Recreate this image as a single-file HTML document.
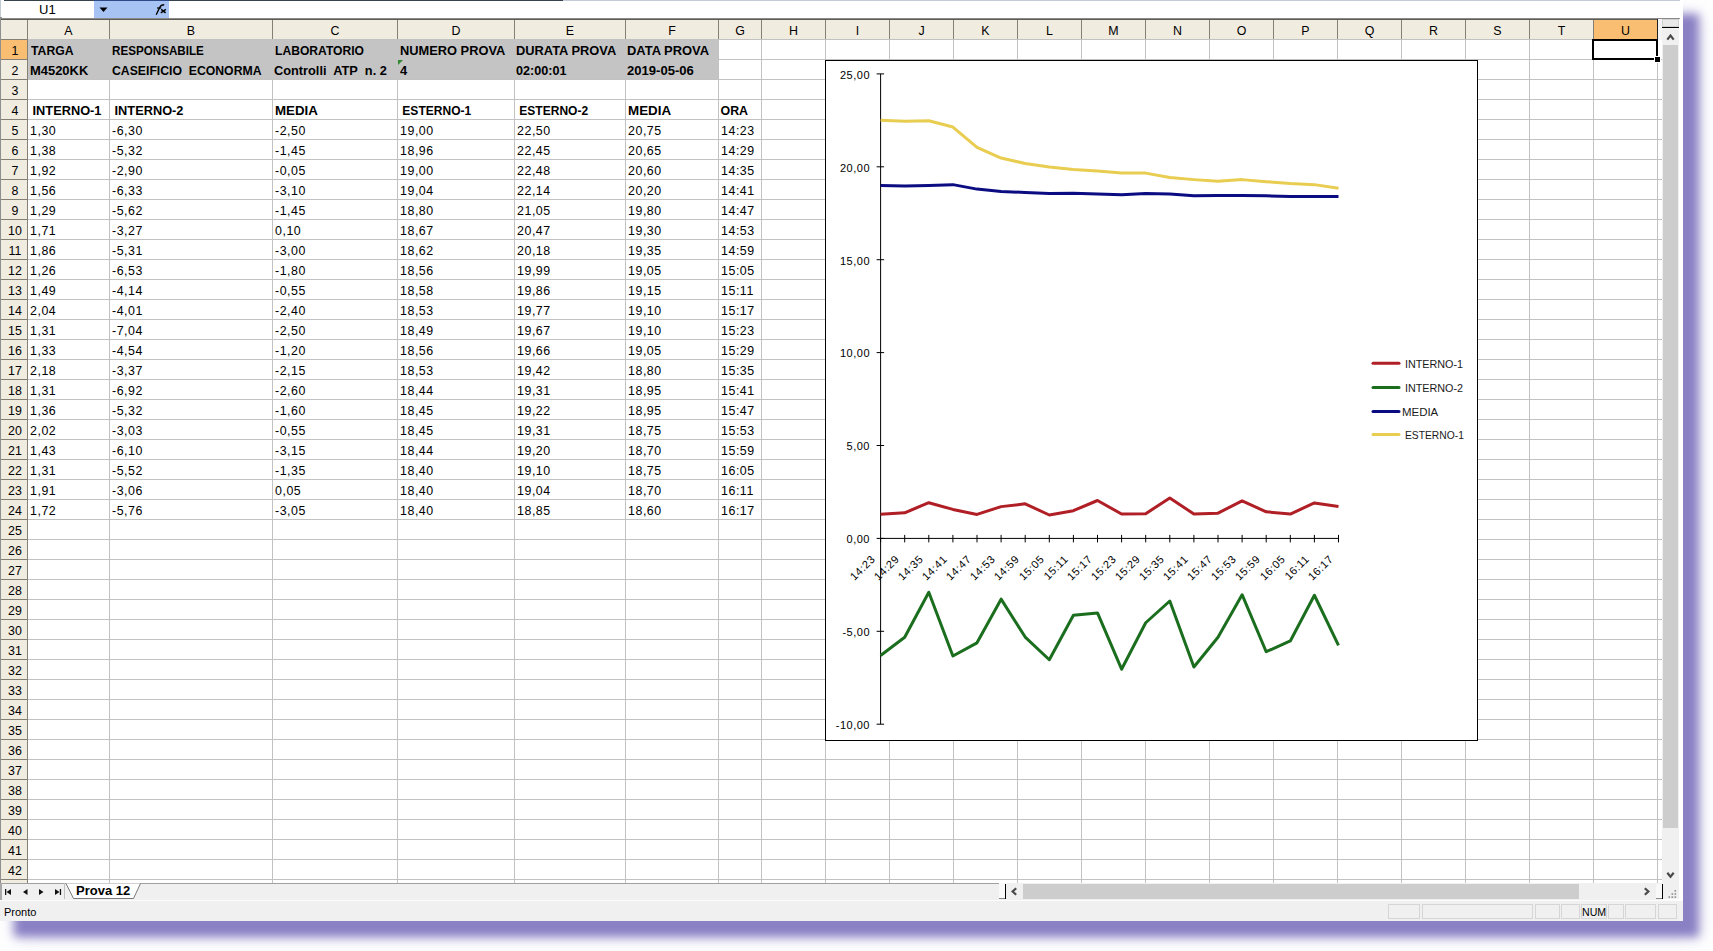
<!DOCTYPE html><html><head><meta charset="utf-8"><style>
*{margin:0;padding:0;box-sizing:border-box}
html,body{width:1713px;height:951px;overflow:hidden;background:#fff}
body{position:relative;font-family:"Liberation Sans",sans-serif;color:#000}
.a{position:absolute}
.t{position:absolute;white-space:nowrap;font-size:12.4px;line-height:20px;height:20px}
.b{font-weight:bold}
.hl{position:absolute;height:1px;background:#c2c2c2}
.vl{position:absolute;width:1px;background:#c2c2c2}

</style></head><body>
<div class="a" style="left:0;top:0;width:1683px;height:921px;background:#fff;box-shadow:15px 15px 9px 1px #8a80c4, 16px 16px 22px 0px rgba(138,128,196,0.22)"></div>
<div class="a" style="left:4px;top:0;width:559px;height:1px;background:#36434a"></div>
<div class="a" style="left:0;top:0;width:1px;height:17px;background:#c2ccd2"></div>
<div class="a" style="left:563px;top:0;width:1117px;height:1px;background:#c3ccd6"></div>
<div class="a" style="left:0;top:17px;width:2px;height:883px;background:#8f8f8f"></div>
<div class="a" style="left:94px;top:0;width:75px;height:1px;background:#2e4a86"></div>
<div class="a" style="left:94px;top:1px;width:75px;height:17.5px;background:#a7c3f3"></div>
<div class="a" style="left:39px;top:1px;font-size:13px;line-height:18px;white-space:nowrap">U1</div>
<svg class="a" style="left:99px;top:7px" width="10" height="6"><path d="M0.5 0.5 L8.5 0.5 L4.5 5 Z" fill="#000"/></svg>
<svg class="a" style="left:150px;top:0px" width="20" height="18"><path d="M6.2 14.7 L9.7 7.4 Q10.9 4.7 14.2 4.7" fill="none" stroke="#000" stroke-width="1.35"/><path d="M7.0 8 L11.2 8" fill="none" stroke="#000" stroke-width="1.2"/><path d="M11.2 9.4 L15.6 12.9 M15.8 9.4 L10.8 12.9" fill="none" stroke="#000" stroke-width="1.45"/></svg>
<div class="a" style="left:1px;top:18px;width:1679px;height:1px;background:#8a8a8a"></div>
<div class="a" style="left:1px;top:19px;width:1661px;height:20px;background:#f1ece0"></div>
<div class="a" style="left:1px;top:19px;width:1661px;height:1px;background:#5f5d58"></div>
<div class="a" style="left:1px;top:39px;width:1661px;height:1px;background:#858075"></div>
<div class="a" style="left:1594px;top:20px;width:63px;height:19px;background:#f9be72"></div>
<div class="a" style="left:109px;top:20px;width:1px;height:19px;background:#858075"></div>
<div class="t" style="left:28px;top:21px;width:81px;text-align:center">A</div>
<div class="a" style="left:272px;top:20px;width:1px;height:19px;background:#858075"></div>
<div class="t" style="left:110px;top:21px;width:162px;text-align:center">B</div>
<div class="a" style="left:397px;top:20px;width:1px;height:19px;background:#858075"></div>
<div class="t" style="left:273px;top:21px;width:124px;text-align:center">C</div>
<div class="a" style="left:514px;top:20px;width:1px;height:19px;background:#858075"></div>
<div class="t" style="left:398px;top:21px;width:116px;text-align:center">D</div>
<div class="a" style="left:625px;top:20px;width:1px;height:19px;background:#858075"></div>
<div class="t" style="left:515px;top:21px;width:110px;text-align:center">E</div>
<div class="a" style="left:718px;top:20px;width:1px;height:19px;background:#858075"></div>
<div class="t" style="left:626px;top:21px;width:92px;text-align:center">F</div>
<div class="a" style="left:761px;top:20px;width:1px;height:19px;background:#858075"></div>
<div class="t" style="left:719px;top:21px;width:42px;text-align:center">G</div>
<div class="a" style="left:825px;top:20px;width:1px;height:19px;background:#858075"></div>
<div class="t" style="left:762px;top:21px;width:63px;text-align:center">H</div>
<div class="a" style="left:889px;top:20px;width:1px;height:19px;background:#858075"></div>
<div class="t" style="left:826px;top:21px;width:63px;text-align:center">I</div>
<div class="a" style="left:953px;top:20px;width:1px;height:19px;background:#858075"></div>
<div class="t" style="left:890px;top:21px;width:63px;text-align:center">J</div>
<div class="a" style="left:1017px;top:20px;width:1px;height:19px;background:#858075"></div>
<div class="t" style="left:954px;top:21px;width:63px;text-align:center">K</div>
<div class="a" style="left:1081px;top:20px;width:1px;height:19px;background:#858075"></div>
<div class="t" style="left:1018px;top:21px;width:63px;text-align:center">L</div>
<div class="a" style="left:1145px;top:20px;width:1px;height:19px;background:#858075"></div>
<div class="t" style="left:1082px;top:21px;width:63px;text-align:center">M</div>
<div class="a" style="left:1209px;top:20px;width:1px;height:19px;background:#858075"></div>
<div class="t" style="left:1146px;top:21px;width:63px;text-align:center">N</div>
<div class="a" style="left:1273px;top:20px;width:1px;height:19px;background:#858075"></div>
<div class="t" style="left:1210px;top:21px;width:63px;text-align:center">O</div>
<div class="a" style="left:1337px;top:20px;width:1px;height:19px;background:#858075"></div>
<div class="t" style="left:1274px;top:21px;width:63px;text-align:center">P</div>
<div class="a" style="left:1401px;top:20px;width:1px;height:19px;background:#858075"></div>
<div class="t" style="left:1338px;top:21px;width:63px;text-align:center">Q</div>
<div class="a" style="left:1465px;top:20px;width:1px;height:19px;background:#858075"></div>
<div class="t" style="left:1402px;top:21px;width:63px;text-align:center">R</div>
<div class="a" style="left:1529px;top:20px;width:1px;height:19px;background:#858075"></div>
<div class="t" style="left:1466px;top:21px;width:63px;text-align:center">S</div>
<div class="a" style="left:1593px;top:20px;width:1px;height:19px;background:#858075"></div>
<div class="t" style="left:1530px;top:21px;width:63px;text-align:center">T</div>
<div class="a" style="left:1657px;top:20px;width:1px;height:19px;background:#858075"></div>
<div class="t" style="left:1594px;top:21px;width:63px;text-align:center">U</div>
<div class="a" style="left:1657px;top:19px;width:1px;height:20px;background:#222"></div>
<div class="a" style="left:1px;top:40px;width:26px;height:843px;background:#f1ece0"></div>
<div class="a" style="left:27px;top:20px;width:1px;height:863px;background:#858075"></div>
<div class="hl" style="left:1px;top:39px;width:26px;background:#858075"></div>
<div class="hl" style="left:28px;top:39px;width:1634px"></div>
<div class="hl" style="left:1px;top:59px;width:26px;background:#858075"></div>
<div class="hl" style="left:28px;top:59px;width:1634px"></div>
<div class="hl" style="left:1px;top:79px;width:26px;background:#858075"></div>
<div class="hl" style="left:28px;top:79px;width:1634px"></div>
<div class="hl" style="left:1px;top:99px;width:26px;background:#858075"></div>
<div class="hl" style="left:28px;top:99px;width:1634px"></div>
<div class="hl" style="left:1px;top:119px;width:26px;background:#858075"></div>
<div class="hl" style="left:28px;top:119px;width:1634px"></div>
<div class="hl" style="left:1px;top:139px;width:26px;background:#858075"></div>
<div class="hl" style="left:28px;top:139px;width:1634px"></div>
<div class="hl" style="left:1px;top:159px;width:26px;background:#858075"></div>
<div class="hl" style="left:28px;top:159px;width:1634px"></div>
<div class="hl" style="left:1px;top:179px;width:26px;background:#858075"></div>
<div class="hl" style="left:28px;top:179px;width:1634px"></div>
<div class="hl" style="left:1px;top:199px;width:26px;background:#858075"></div>
<div class="hl" style="left:28px;top:199px;width:1634px"></div>
<div class="hl" style="left:1px;top:219px;width:26px;background:#858075"></div>
<div class="hl" style="left:28px;top:219px;width:1634px"></div>
<div class="hl" style="left:1px;top:239px;width:26px;background:#858075"></div>
<div class="hl" style="left:28px;top:239px;width:1634px"></div>
<div class="hl" style="left:1px;top:259px;width:26px;background:#858075"></div>
<div class="hl" style="left:28px;top:259px;width:1634px"></div>
<div class="hl" style="left:1px;top:279px;width:26px;background:#858075"></div>
<div class="hl" style="left:28px;top:279px;width:1634px"></div>
<div class="hl" style="left:1px;top:299px;width:26px;background:#858075"></div>
<div class="hl" style="left:28px;top:299px;width:1634px"></div>
<div class="hl" style="left:1px;top:319px;width:26px;background:#858075"></div>
<div class="hl" style="left:28px;top:319px;width:1634px"></div>
<div class="hl" style="left:1px;top:339px;width:26px;background:#858075"></div>
<div class="hl" style="left:28px;top:339px;width:1634px"></div>
<div class="hl" style="left:1px;top:359px;width:26px;background:#858075"></div>
<div class="hl" style="left:28px;top:359px;width:1634px"></div>
<div class="hl" style="left:1px;top:379px;width:26px;background:#858075"></div>
<div class="hl" style="left:28px;top:379px;width:1634px"></div>
<div class="hl" style="left:1px;top:399px;width:26px;background:#858075"></div>
<div class="hl" style="left:28px;top:399px;width:1634px"></div>
<div class="hl" style="left:1px;top:419px;width:26px;background:#858075"></div>
<div class="hl" style="left:28px;top:419px;width:1634px"></div>
<div class="hl" style="left:1px;top:439px;width:26px;background:#858075"></div>
<div class="hl" style="left:28px;top:439px;width:1634px"></div>
<div class="hl" style="left:1px;top:459px;width:26px;background:#858075"></div>
<div class="hl" style="left:28px;top:459px;width:1634px"></div>
<div class="hl" style="left:1px;top:479px;width:26px;background:#858075"></div>
<div class="hl" style="left:28px;top:479px;width:1634px"></div>
<div class="hl" style="left:1px;top:499px;width:26px;background:#858075"></div>
<div class="hl" style="left:28px;top:499px;width:1634px"></div>
<div class="hl" style="left:1px;top:519px;width:26px;background:#858075"></div>
<div class="hl" style="left:28px;top:519px;width:1634px"></div>
<div class="hl" style="left:1px;top:539px;width:26px;background:#858075"></div>
<div class="hl" style="left:28px;top:539px;width:1634px"></div>
<div class="hl" style="left:1px;top:559px;width:26px;background:#858075"></div>
<div class="hl" style="left:28px;top:559px;width:1634px"></div>
<div class="hl" style="left:1px;top:579px;width:26px;background:#858075"></div>
<div class="hl" style="left:28px;top:579px;width:1634px"></div>
<div class="hl" style="left:1px;top:599px;width:26px;background:#858075"></div>
<div class="hl" style="left:28px;top:599px;width:1634px"></div>
<div class="hl" style="left:1px;top:619px;width:26px;background:#858075"></div>
<div class="hl" style="left:28px;top:619px;width:1634px"></div>
<div class="hl" style="left:1px;top:639px;width:26px;background:#858075"></div>
<div class="hl" style="left:28px;top:639px;width:1634px"></div>
<div class="hl" style="left:1px;top:659px;width:26px;background:#858075"></div>
<div class="hl" style="left:28px;top:659px;width:1634px"></div>
<div class="hl" style="left:1px;top:679px;width:26px;background:#858075"></div>
<div class="hl" style="left:28px;top:679px;width:1634px"></div>
<div class="hl" style="left:1px;top:699px;width:26px;background:#858075"></div>
<div class="hl" style="left:28px;top:699px;width:1634px"></div>
<div class="hl" style="left:1px;top:719px;width:26px;background:#858075"></div>
<div class="hl" style="left:28px;top:719px;width:1634px"></div>
<div class="hl" style="left:1px;top:739px;width:26px;background:#858075"></div>
<div class="hl" style="left:28px;top:739px;width:1634px"></div>
<div class="hl" style="left:1px;top:759px;width:26px;background:#858075"></div>
<div class="hl" style="left:28px;top:759px;width:1634px"></div>
<div class="hl" style="left:1px;top:779px;width:26px;background:#858075"></div>
<div class="hl" style="left:28px;top:779px;width:1634px"></div>
<div class="hl" style="left:1px;top:799px;width:26px;background:#858075"></div>
<div class="hl" style="left:28px;top:799px;width:1634px"></div>
<div class="hl" style="left:1px;top:819px;width:26px;background:#858075"></div>
<div class="hl" style="left:28px;top:819px;width:1634px"></div>
<div class="hl" style="left:1px;top:839px;width:26px;background:#858075"></div>
<div class="hl" style="left:28px;top:839px;width:1634px"></div>
<div class="hl" style="left:1px;top:859px;width:26px;background:#858075"></div>
<div class="hl" style="left:28px;top:859px;width:1634px"></div>
<div class="hl" style="left:1px;top:879px;width:26px;background:#858075"></div>
<div class="hl" style="left:28px;top:879px;width:1634px"></div>
<div class="vl" style="left:109px;top:40px;height:843px"></div>
<div class="vl" style="left:272px;top:40px;height:843px"></div>
<div class="vl" style="left:397px;top:40px;height:843px"></div>
<div class="vl" style="left:514px;top:40px;height:843px"></div>
<div class="vl" style="left:625px;top:40px;height:843px"></div>
<div class="vl" style="left:718px;top:40px;height:843px"></div>
<div class="vl" style="left:761px;top:40px;height:843px"></div>
<div class="vl" style="left:825px;top:40px;height:843px"></div>
<div class="vl" style="left:889px;top:40px;height:843px"></div>
<div class="vl" style="left:953px;top:40px;height:843px"></div>
<div class="vl" style="left:1017px;top:40px;height:843px"></div>
<div class="vl" style="left:1081px;top:40px;height:843px"></div>
<div class="vl" style="left:1145px;top:40px;height:843px"></div>
<div class="vl" style="left:1209px;top:40px;height:843px"></div>
<div class="vl" style="left:1273px;top:40px;height:843px"></div>
<div class="vl" style="left:1337px;top:40px;height:843px"></div>
<div class="vl" style="left:1401px;top:40px;height:843px"></div>
<div class="vl" style="left:1465px;top:40px;height:843px"></div>
<div class="vl" style="left:1529px;top:40px;height:843px"></div>
<div class="vl" style="left:1593px;top:40px;height:843px"></div>
<div class="vl" style="left:1657px;top:40px;height:843px"></div>
<div class="a" style="left:1px;top:40px;width:26px;height:19px;background:#f9be72"></div>
<div class="t" style="left:2px;width:26px;text-align:center;top:41px">1</div>
<div class="t" style="left:2px;width:26px;text-align:center;top:61px">2</div>
<div class="t" style="left:2px;width:26px;text-align:center;top:81px">3</div>
<div class="t" style="left:2px;width:26px;text-align:center;top:101px">4</div>
<div class="t" style="left:2px;width:26px;text-align:center;top:121px">5</div>
<div class="t" style="left:2px;width:26px;text-align:center;top:141px">6</div>
<div class="t" style="left:2px;width:26px;text-align:center;top:161px">7</div>
<div class="t" style="left:2px;width:26px;text-align:center;top:181px">8</div>
<div class="t" style="left:2px;width:26px;text-align:center;top:201px">9</div>
<div class="t" style="left:2px;width:26px;text-align:center;top:221px">10</div>
<div class="t" style="left:2px;width:26px;text-align:center;top:241px">11</div>
<div class="t" style="left:2px;width:26px;text-align:center;top:261px">12</div>
<div class="t" style="left:2px;width:26px;text-align:center;top:281px">13</div>
<div class="t" style="left:2px;width:26px;text-align:center;top:301px">14</div>
<div class="t" style="left:2px;width:26px;text-align:center;top:321px">15</div>
<div class="t" style="left:2px;width:26px;text-align:center;top:341px">16</div>
<div class="t" style="left:2px;width:26px;text-align:center;top:361px">17</div>
<div class="t" style="left:2px;width:26px;text-align:center;top:381px">18</div>
<div class="t" style="left:2px;width:26px;text-align:center;top:401px">19</div>
<div class="t" style="left:2px;width:26px;text-align:center;top:421px">20</div>
<div class="t" style="left:2px;width:26px;text-align:center;top:441px">21</div>
<div class="t" style="left:2px;width:26px;text-align:center;top:461px">22</div>
<div class="t" style="left:2px;width:26px;text-align:center;top:481px">23</div>
<div class="t" style="left:2px;width:26px;text-align:center;top:501px">24</div>
<div class="t" style="left:2px;width:26px;text-align:center;top:521px">25</div>
<div class="t" style="left:2px;width:26px;text-align:center;top:541px">26</div>
<div class="t" style="left:2px;width:26px;text-align:center;top:561px">27</div>
<div class="t" style="left:2px;width:26px;text-align:center;top:581px">28</div>
<div class="t" style="left:2px;width:26px;text-align:center;top:601px">29</div>
<div class="t" style="left:2px;width:26px;text-align:center;top:621px">30</div>
<div class="t" style="left:2px;width:26px;text-align:center;top:641px">31</div>
<div class="t" style="left:2px;width:26px;text-align:center;top:661px">32</div>
<div class="t" style="left:2px;width:26px;text-align:center;top:681px">33</div>
<div class="t" style="left:2px;width:26px;text-align:center;top:701px">34</div>
<div class="t" style="left:2px;width:26px;text-align:center;top:721px">35</div>
<div class="t" style="left:2px;width:26px;text-align:center;top:741px">36</div>
<div class="t" style="left:2px;width:26px;text-align:center;top:761px">37</div>
<div class="t" style="left:2px;width:26px;text-align:center;top:781px">38</div>
<div class="t" style="left:2px;width:26px;text-align:center;top:801px">39</div>
<div class="t" style="left:2px;width:26px;text-align:center;top:821px">40</div>
<div class="t" style="left:2px;width:26px;text-align:center;top:841px">41</div>
<div class="t" style="left:2px;width:26px;text-align:center;top:861px">42</div>
<div class="t" style="left:2px;width:26px;text-align:center;top:881px">43</div>
<div class="a" style="left:28px;top:40px;width:690px;height:39px;background:#c4c4c5"></div>
<div class="t b" style="left:30.60px;top:41px;transform:scaleX(0.986);transform-origin:0 50%;">TARGA</div>
<div class="t b" style="left:111.76px;top:41px;transform:scaleX(0.939);transform-origin:0 50%;">RESPONSABILE</div>
<div class="t b" style="left:274.52px;top:41px;transform:scaleX(0.977);transform-origin:0 50%;">LABORATORIO</div>
<div class="t b" style="left:399.56px;top:41px;transform:scaleX(1.036);transform-origin:0 50%;">NUMERO PROVA</div>
<div class="t b" style="left:516.26px;top:41px;transform:scaleX(1.037);transform-origin:0 50%;">DURATA PROVA</div>
<div class="t b" style="left:627.46px;top:41px;transform:scaleX(1.043);transform-origin:0 50%;">DATA PROVA</div>
<div class="t b" style="left:29.56px;top:61px;transform:scaleX(1.044);transform-origin:0 50%;">M4520KK</div>
<div class="t b" style="left:111.71px;top:61px;transform:scaleX(0.987);transform-origin:0 50%;">CASEIFICIO&nbsp; ECONORMA</div>
<div class="t b" style="left:274.47px;top:61px;transform:scaleX(1.031);transform-origin:0 50%;">Controlli&nbsp; ATP&nbsp; n. 2</div>
<div class="t b" style="left:399.90px;top:61px;transform:scaleX(1.043);transform-origin:0 50%;">4</div>
<div class="t b" style="left:516.28px;top:61px;transform:scaleX(1.019);transform-origin:0 50%;">02:00:01</div>
<div class="t b" style="left:627.45px;top:61px;transform:scaleX(1.055);transform-origin:0 50%;">2019-05-06</div>
<div class="t b" style="left:28.64px;top:101px;transform:scaleX(1.032);transform-origin:0 50%;">&nbsp;INTERNO-1</div>
<div class="t b" style="left:110.64px;top:101px;transform:scaleX(1.032);transform-origin:0 50%;">&nbsp;INTERNO-2</div>
<div class="t b" style="left:274.53px;top:101px;transform:scaleX(1.074);transform-origin:0 50%;">MEDIA</div>
<div class="t b" style="left:398.74px;top:101px;transform:scaleX(0.971);transform-origin:0 50%;">&nbsp;ESTERNO-1</div>
<div class="t b" style="left:515.85px;top:101px;transform:scaleX(0.970);transform-origin:0 50%;">&nbsp;ESTERNO-2</div>
<div class="t b" style="left:627.62px;top:101px;transform:scaleX(1.079);transform-origin:0 50%;">MEDIA</div>
<div class="t b" style="left:720.50px;top:101px;transform:scaleX(1.000);transform-origin:0 50%;">ORA</div>
<div class="t" style="left:30px;top:121px;letter-spacing:0.55px;">1,30</div>
<div class="t" style="left:112px;top:121px;letter-spacing:0.55px;">-6,30</div>
<div class="t" style="left:275px;top:121px;letter-spacing:0.55px;">-2,50</div>
<div class="t" style="left:400px;top:121px;letter-spacing:0.55px;">19,00</div>
<div class="t" style="left:517px;top:121px;letter-spacing:0.55px;">22,50</div>
<div class="t" style="left:628px;top:121px;letter-spacing:0.55px;">20,75</div>
<div class="t" style="left:721px;top:121px;letter-spacing:0.55px;">14:23</div>
<div class="t" style="left:30px;top:141px;letter-spacing:0.55px;">1,38</div>
<div class="t" style="left:112px;top:141px;letter-spacing:0.55px;">-5,32</div>
<div class="t" style="left:275px;top:141px;letter-spacing:0.55px;">-1,45</div>
<div class="t" style="left:400px;top:141px;letter-spacing:0.55px;">18,96</div>
<div class="t" style="left:517px;top:141px;letter-spacing:0.55px;">22,45</div>
<div class="t" style="left:628px;top:141px;letter-spacing:0.55px;">20,65</div>
<div class="t" style="left:721px;top:141px;letter-spacing:0.55px;">14:29</div>
<div class="t" style="left:30px;top:161px;letter-spacing:0.55px;">1,92</div>
<div class="t" style="left:112px;top:161px;letter-spacing:0.55px;">-2,90</div>
<div class="t" style="left:275px;top:161px;letter-spacing:0.55px;">-0,05</div>
<div class="t" style="left:400px;top:161px;letter-spacing:0.55px;">19,00</div>
<div class="t" style="left:517px;top:161px;letter-spacing:0.55px;">22,48</div>
<div class="t" style="left:628px;top:161px;letter-spacing:0.55px;">20,60</div>
<div class="t" style="left:721px;top:161px;letter-spacing:0.55px;">14:35</div>
<div class="t" style="left:30px;top:181px;letter-spacing:0.55px;">1,56</div>
<div class="t" style="left:112px;top:181px;letter-spacing:0.55px;">-6,33</div>
<div class="t" style="left:275px;top:181px;letter-spacing:0.55px;">-3,10</div>
<div class="t" style="left:400px;top:181px;letter-spacing:0.55px;">19,04</div>
<div class="t" style="left:517px;top:181px;letter-spacing:0.55px;">22,14</div>
<div class="t" style="left:628px;top:181px;letter-spacing:0.55px;">20,20</div>
<div class="t" style="left:721px;top:181px;letter-spacing:0.55px;">14:41</div>
<div class="t" style="left:30px;top:201px;letter-spacing:0.55px;">1,29</div>
<div class="t" style="left:112px;top:201px;letter-spacing:0.55px;">-5,62</div>
<div class="t" style="left:275px;top:201px;letter-spacing:0.55px;">-1,45</div>
<div class="t" style="left:400px;top:201px;letter-spacing:0.55px;">18,80</div>
<div class="t" style="left:517px;top:201px;letter-spacing:0.55px;">21,05</div>
<div class="t" style="left:628px;top:201px;letter-spacing:0.55px;">19,80</div>
<div class="t" style="left:721px;top:201px;letter-spacing:0.55px;">14:47</div>
<div class="t" style="left:30px;top:221px;letter-spacing:0.55px;">1,71</div>
<div class="t" style="left:112px;top:221px;letter-spacing:0.55px;">-3,27</div>
<div class="t" style="left:275px;top:221px;letter-spacing:0.55px;">0,10</div>
<div class="t" style="left:400px;top:221px;letter-spacing:0.55px;">18,67</div>
<div class="t" style="left:517px;top:221px;letter-spacing:0.55px;">20,47</div>
<div class="t" style="left:628px;top:221px;letter-spacing:0.55px;">19,30</div>
<div class="t" style="left:721px;top:221px;letter-spacing:0.55px;">14:53</div>
<div class="t" style="left:30px;top:241px;letter-spacing:0.55px;">1,86</div>
<div class="t" style="left:112px;top:241px;letter-spacing:0.55px;">-5,31</div>
<div class="t" style="left:275px;top:241px;letter-spacing:0.55px;">-3,00</div>
<div class="t" style="left:400px;top:241px;letter-spacing:0.55px;">18,62</div>
<div class="t" style="left:517px;top:241px;letter-spacing:0.55px;">20,18</div>
<div class="t" style="left:628px;top:241px;letter-spacing:0.55px;">19,35</div>
<div class="t" style="left:721px;top:241px;letter-spacing:0.55px;">14:59</div>
<div class="t" style="left:30px;top:261px;letter-spacing:0.55px;">1,26</div>
<div class="t" style="left:112px;top:261px;letter-spacing:0.55px;">-6,53</div>
<div class="t" style="left:275px;top:261px;letter-spacing:0.55px;">-1,80</div>
<div class="t" style="left:400px;top:261px;letter-spacing:0.55px;">18,56</div>
<div class="t" style="left:517px;top:261px;letter-spacing:0.55px;">19,99</div>
<div class="t" style="left:628px;top:261px;letter-spacing:0.55px;">19,05</div>
<div class="t" style="left:721px;top:261px;letter-spacing:0.55px;">15:05</div>
<div class="t" style="left:30px;top:281px;letter-spacing:0.55px;">1,49</div>
<div class="t" style="left:112px;top:281px;letter-spacing:0.55px;">-4,14</div>
<div class="t" style="left:275px;top:281px;letter-spacing:0.55px;">-0,55</div>
<div class="t" style="left:400px;top:281px;letter-spacing:0.55px;">18,58</div>
<div class="t" style="left:517px;top:281px;letter-spacing:0.55px;">19,86</div>
<div class="t" style="left:628px;top:281px;letter-spacing:0.55px;">19,15</div>
<div class="t" style="left:721px;top:281px;letter-spacing:0.55px;">15:11</div>
<div class="t" style="left:30px;top:301px;letter-spacing:0.55px;">2,04</div>
<div class="t" style="left:112px;top:301px;letter-spacing:0.55px;">-4,01</div>
<div class="t" style="left:275px;top:301px;letter-spacing:0.55px;">-2,40</div>
<div class="t" style="left:400px;top:301px;letter-spacing:0.55px;">18,53</div>
<div class="t" style="left:517px;top:301px;letter-spacing:0.55px;">19,77</div>
<div class="t" style="left:628px;top:301px;letter-spacing:0.55px;">19,10</div>
<div class="t" style="left:721px;top:301px;letter-spacing:0.55px;">15:17</div>
<div class="t" style="left:30px;top:321px;letter-spacing:0.55px;">1,31</div>
<div class="t" style="left:112px;top:321px;letter-spacing:0.55px;">-7,04</div>
<div class="t" style="left:275px;top:321px;letter-spacing:0.55px;">-2,50</div>
<div class="t" style="left:400px;top:321px;letter-spacing:0.55px;">18,49</div>
<div class="t" style="left:517px;top:321px;letter-spacing:0.55px;">19,67</div>
<div class="t" style="left:628px;top:321px;letter-spacing:0.55px;">19,10</div>
<div class="t" style="left:721px;top:321px;letter-spacing:0.55px;">15:23</div>
<div class="t" style="left:30px;top:341px;letter-spacing:0.55px;">1,33</div>
<div class="t" style="left:112px;top:341px;letter-spacing:0.55px;">-4,54</div>
<div class="t" style="left:275px;top:341px;letter-spacing:0.55px;">-1,20</div>
<div class="t" style="left:400px;top:341px;letter-spacing:0.55px;">18,56</div>
<div class="t" style="left:517px;top:341px;letter-spacing:0.55px;">19,66</div>
<div class="t" style="left:628px;top:341px;letter-spacing:0.55px;">19,05</div>
<div class="t" style="left:721px;top:341px;letter-spacing:0.55px;">15:29</div>
<div class="t" style="left:30px;top:361px;letter-spacing:0.55px;">2,18</div>
<div class="t" style="left:112px;top:361px;letter-spacing:0.55px;">-3,37</div>
<div class="t" style="left:275px;top:361px;letter-spacing:0.55px;">-2,15</div>
<div class="t" style="left:400px;top:361px;letter-spacing:0.55px;">18,53</div>
<div class="t" style="left:517px;top:361px;letter-spacing:0.55px;">19,42</div>
<div class="t" style="left:628px;top:361px;letter-spacing:0.55px;">18,80</div>
<div class="t" style="left:721px;top:361px;letter-spacing:0.55px;">15:35</div>
<div class="t" style="left:30px;top:381px;letter-spacing:0.55px;">1,31</div>
<div class="t" style="left:112px;top:381px;letter-spacing:0.55px;">-6,92</div>
<div class="t" style="left:275px;top:381px;letter-spacing:0.55px;">-2,60</div>
<div class="t" style="left:400px;top:381px;letter-spacing:0.55px;">18,44</div>
<div class="t" style="left:517px;top:381px;letter-spacing:0.55px;">19,31</div>
<div class="t" style="left:628px;top:381px;letter-spacing:0.55px;">18,95</div>
<div class="t" style="left:721px;top:381px;letter-spacing:0.55px;">15:41</div>
<div class="t" style="left:30px;top:401px;letter-spacing:0.55px;">1,36</div>
<div class="t" style="left:112px;top:401px;letter-spacing:0.55px;">-5,32</div>
<div class="t" style="left:275px;top:401px;letter-spacing:0.55px;">-1,60</div>
<div class="t" style="left:400px;top:401px;letter-spacing:0.55px;">18,45</div>
<div class="t" style="left:517px;top:401px;letter-spacing:0.55px;">19,22</div>
<div class="t" style="left:628px;top:401px;letter-spacing:0.55px;">18,95</div>
<div class="t" style="left:721px;top:401px;letter-spacing:0.55px;">15:47</div>
<div class="t" style="left:30px;top:421px;letter-spacing:0.55px;">2,02</div>
<div class="t" style="left:112px;top:421px;letter-spacing:0.55px;">-3,03</div>
<div class="t" style="left:275px;top:421px;letter-spacing:0.55px;">-0,55</div>
<div class="t" style="left:400px;top:421px;letter-spacing:0.55px;">18,45</div>
<div class="t" style="left:517px;top:421px;letter-spacing:0.55px;">19,31</div>
<div class="t" style="left:628px;top:421px;letter-spacing:0.55px;">18,75</div>
<div class="t" style="left:721px;top:421px;letter-spacing:0.55px;">15:53</div>
<div class="t" style="left:30px;top:441px;letter-spacing:0.55px;">1,43</div>
<div class="t" style="left:112px;top:441px;letter-spacing:0.55px;">-6,10</div>
<div class="t" style="left:275px;top:441px;letter-spacing:0.55px;">-3,15</div>
<div class="t" style="left:400px;top:441px;letter-spacing:0.55px;">18,44</div>
<div class="t" style="left:517px;top:441px;letter-spacing:0.55px;">19,20</div>
<div class="t" style="left:628px;top:441px;letter-spacing:0.55px;">18,70</div>
<div class="t" style="left:721px;top:441px;letter-spacing:0.55px;">15:59</div>
<div class="t" style="left:30px;top:461px;letter-spacing:0.55px;">1,31</div>
<div class="t" style="left:112px;top:461px;letter-spacing:0.55px;">-5,52</div>
<div class="t" style="left:275px;top:461px;letter-spacing:0.55px;">-1,35</div>
<div class="t" style="left:400px;top:461px;letter-spacing:0.55px;">18,40</div>
<div class="t" style="left:517px;top:461px;letter-spacing:0.55px;">19,10</div>
<div class="t" style="left:628px;top:461px;letter-spacing:0.55px;">18,75</div>
<div class="t" style="left:721px;top:461px;letter-spacing:0.55px;">16:05</div>
<div class="t" style="left:30px;top:481px;letter-spacing:0.55px;">1,91</div>
<div class="t" style="left:112px;top:481px;letter-spacing:0.55px;">-3,06</div>
<div class="t" style="left:275px;top:481px;letter-spacing:0.55px;">0,05</div>
<div class="t" style="left:400px;top:481px;letter-spacing:0.55px;">18,40</div>
<div class="t" style="left:517px;top:481px;letter-spacing:0.55px;">19,04</div>
<div class="t" style="left:628px;top:481px;letter-spacing:0.55px;">18,70</div>
<div class="t" style="left:721px;top:481px;letter-spacing:0.55px;">16:11</div>
<div class="t" style="left:30px;top:501px;letter-spacing:0.55px;">1,72</div>
<div class="t" style="left:112px;top:501px;letter-spacing:0.55px;">-5,76</div>
<div class="t" style="left:275px;top:501px;letter-spacing:0.55px;">-3,05</div>
<div class="t" style="left:400px;top:501px;letter-spacing:0.55px;">18,40</div>
<div class="t" style="left:517px;top:501px;letter-spacing:0.55px;">18,85</div>
<div class="t" style="left:628px;top:501px;letter-spacing:0.55px;">18,60</div>
<div class="t" style="left:721px;top:501px;letter-spacing:0.55px;">16:17</div>
<svg class="a" style="left:398px;top:60px" width="6" height="6"><path d="M0 0 L5 0 L0 5 Z" fill="#2f8a2f"/></svg>
<div class="a" style="left:1592px;top:39px;width:66px;height:21px;border:2px solid #000"></div>
<div class="a" style="left:1655px;top:57px;width:5px;height:5px;background:#000;box-shadow:0 0 0 1px #fff"></div>

<svg class="a" style="left:0;top:0" width="1713" height="951"><rect x="825.5" y="60.5" width="652.0" height="680.0" fill="#fff" stroke="#000" stroke-width="1"/><line x1="880.60" y1="73.90" x2="880.60" y2="724.20" stroke="#000" stroke-width="1"/><line x1="880.60" y1="538.40" x2="1338.50" y2="538.40" stroke="#000" stroke-width="1"/><line x1="876.60" y1="724.20" x2="884.10" y2="724.20" stroke="#000" stroke-width="1"/><line x1="876.60" y1="631.30" x2="884.10" y2="631.30" stroke="#000" stroke-width="1"/><line x1="876.60" y1="538.40" x2="884.10" y2="538.40" stroke="#000" stroke-width="1"/><line x1="876.60" y1="445.50" x2="884.10" y2="445.50" stroke="#000" stroke-width="1"/><line x1="876.60" y1="352.60" x2="884.10" y2="352.60" stroke="#000" stroke-width="1"/><line x1="876.60" y1="259.70" x2="884.10" y2="259.70" stroke="#000" stroke-width="1"/><line x1="876.60" y1="166.80" x2="884.10" y2="166.80" stroke="#000" stroke-width="1"/><line x1="876.60" y1="73.90" x2="884.10" y2="73.90" stroke="#000" stroke-width="1"/><line x1="904.70" y1="534.90" x2="904.70" y2="542.40" stroke="#000" stroke-width="1"/><line x1="928.80" y1="534.90" x2="928.80" y2="542.40" stroke="#000" stroke-width="1"/><line x1="952.90" y1="534.90" x2="952.90" y2="542.40" stroke="#000" stroke-width="1"/><line x1="977.00" y1="534.90" x2="977.00" y2="542.40" stroke="#000" stroke-width="1"/><line x1="1001.10" y1="534.90" x2="1001.10" y2="542.40" stroke="#000" stroke-width="1"/><line x1="1025.20" y1="534.90" x2="1025.20" y2="542.40" stroke="#000" stroke-width="1"/><line x1="1049.30" y1="534.90" x2="1049.30" y2="542.40" stroke="#000" stroke-width="1"/><line x1="1073.40" y1="534.90" x2="1073.40" y2="542.40" stroke="#000" stroke-width="1"/><line x1="1097.50" y1="534.90" x2="1097.50" y2="542.40" stroke="#000" stroke-width="1"/><line x1="1121.60" y1="534.90" x2="1121.60" y2="542.40" stroke="#000" stroke-width="1"/><line x1="1145.70" y1="534.90" x2="1145.70" y2="542.40" stroke="#000" stroke-width="1"/><line x1="1169.80" y1="534.90" x2="1169.80" y2="542.40" stroke="#000" stroke-width="1"/><line x1="1193.90" y1="534.90" x2="1193.90" y2="542.40" stroke="#000" stroke-width="1"/><line x1="1218.00" y1="534.90" x2="1218.00" y2="542.40" stroke="#000" stroke-width="1"/><line x1="1242.10" y1="534.90" x2="1242.10" y2="542.40" stroke="#000" stroke-width="1"/><line x1="1266.20" y1="534.90" x2="1266.20" y2="542.40" stroke="#000" stroke-width="1"/><line x1="1290.30" y1="534.90" x2="1290.30" y2="542.40" stroke="#000" stroke-width="1"/><line x1="1314.40" y1="534.90" x2="1314.40" y2="542.40" stroke="#000" stroke-width="1"/><line x1="1338.50" y1="534.90" x2="1338.50" y2="542.40" stroke="#000" stroke-width="1"/><line x1="880.60" y1="538.40" x2="880.60" y2="542.40" stroke="#000" stroke-width="1"/><polyline points="880.60,514.25 904.70,512.76 928.80,502.73 952.90,509.42 977.00,514.43 1001.10,506.63 1025.20,503.84 1049.30,514.99 1073.40,510.72 1097.50,500.50 1121.60,514.06 1145.70,513.69 1169.80,497.90 1193.90,514.06 1218.00,513.13 1242.10,500.87 1266.20,511.83 1290.30,514.06 1314.40,502.91 1338.50,506.44" fill="none" stroke="#b01e26" stroke-width="3" stroke-linejoin="round" stroke-linecap="butt"/><polyline points="880.60,655.45 904.70,637.25 928.80,592.28 952.90,656.01 977.00,642.82 1001.10,599.16 1025.20,637.06 1049.30,659.73 1073.40,615.32 1097.50,612.91 1121.60,669.20 1145.70,622.75 1169.80,601.01 1193.90,666.97 1218.00,637.25 1242.10,594.70 1266.20,651.74 1290.30,640.96 1314.40,595.25 1338.50,645.42" fill="none" stroke="#1b6e1e" stroke-width="3" stroke-linejoin="round" stroke-linecap="butt"/><polyline points="880.60,185.38 904.70,186.12 928.80,185.38 952.90,184.64 977.00,189.10 1001.10,191.51 1025.20,192.44 1049.30,193.56 1073.40,193.18 1097.50,194.11 1121.60,194.86 1145.70,193.56 1169.80,194.11 1193.90,195.78 1218.00,195.60 1242.10,195.60 1266.20,195.78 1290.30,196.53 1314.40,196.53 1338.50,196.53" fill="none" stroke="#0c0c82" stroke-width="3" stroke-linejoin="round" stroke-linecap="butt"/><polyline points="880.60,120.35 904.70,121.28 928.80,120.72 952.90,127.04 977.00,147.29 1001.10,158.07 1025.20,163.46 1049.30,166.99 1073.40,169.40 1097.50,171.07 1121.60,172.93 1145.70,173.12 1169.80,177.58 1193.90,179.62 1218.00,181.29 1242.10,179.62 1266.20,181.66 1290.30,183.52 1314.40,184.64 1338.50,188.17" fill="none" stroke="#e8cd50" stroke-width="3" stroke-linejoin="round" stroke-linecap="butt"/><line x1="1373" y1="363.2" x2="1399" y2="363.2" stroke="#b01e26" stroke-width="3" stroke-linecap="round"/><line x1="1373" y1="387.4" x2="1399" y2="387.4" stroke="#1b6e1e" stroke-width="3" stroke-linecap="round"/><line x1="1373" y1="411.6" x2="1399" y2="411.6" stroke="#0c0c82" stroke-width="3" stroke-linecap="round"/><line x1="1373" y1="434.6" x2="1399" y2="434.6" stroke="#e8cd50" stroke-width="3" stroke-linecap="round"/></svg>
<div class="a" style="left:810px;top:718.0px;width:60px;text-align:right;font-size:11px;line-height:14px;height:14px;white-space:nowrap;letter-spacing:0.5px">-10,00</div>
<div class="a" style="left:810px;top:625.1px;width:60px;text-align:right;font-size:11px;line-height:14px;height:14px;white-space:nowrap;letter-spacing:0.5px">-5,00</div>
<div class="a" style="left:810px;top:532.2px;width:60px;text-align:right;font-size:11px;line-height:14px;height:14px;white-space:nowrap;letter-spacing:0.5px">0,00</div>
<div class="a" style="left:810px;top:439.3px;width:60px;text-align:right;font-size:11px;line-height:14px;height:14px;white-space:nowrap;letter-spacing:0.5px">5,00</div>
<div class="a" style="left:810px;top:346.4px;width:60px;text-align:right;font-size:11px;line-height:14px;height:14px;white-space:nowrap;letter-spacing:0.5px">10,00</div>
<div class="a" style="left:810px;top:253.5px;width:60px;text-align:right;font-size:11px;line-height:14px;height:14px;white-space:nowrap;letter-spacing:0.5px">15,00</div>
<div class="a" style="left:810px;top:160.6px;width:60px;text-align:right;font-size:11px;line-height:14px;height:14px;white-space:nowrap;letter-spacing:0.5px">20,00</div>
<div class="a" style="left:810px;top:67.7px;width:60px;text-align:right;font-size:11px;line-height:14px;height:14px;white-space:nowrap;letter-spacing:0.5px">25,00</div>
<div class="a" style="left:812.8px;top:549.5px;width:60px;height:14px;line-height:14px;text-align:right;font-size:11px;white-space:nowrap;transform-origin:100% 50%;transform:rotate(-45deg);letter-spacing:0.5px">14:23</div>
<div class="a" style="left:836.9px;top:549.5px;width:60px;height:14px;line-height:14px;text-align:right;font-size:11px;white-space:nowrap;transform-origin:100% 50%;transform:rotate(-45deg);letter-spacing:0.5px">14:29</div>
<div class="a" style="left:861.0px;top:549.5px;width:60px;height:14px;line-height:14px;text-align:right;font-size:11px;white-space:nowrap;transform-origin:100% 50%;transform:rotate(-45deg);letter-spacing:0.5px">14:35</div>
<div class="a" style="left:885.1px;top:549.5px;width:60px;height:14px;line-height:14px;text-align:right;font-size:11px;white-space:nowrap;transform-origin:100% 50%;transform:rotate(-45deg);letter-spacing:0.5px">14:41</div>
<div class="a" style="left:909.2px;top:549.5px;width:60px;height:14px;line-height:14px;text-align:right;font-size:11px;white-space:nowrap;transform-origin:100% 50%;transform:rotate(-45deg);letter-spacing:0.5px">14:47</div>
<div class="a" style="left:933.3px;top:549.5px;width:60px;height:14px;line-height:14px;text-align:right;font-size:11px;white-space:nowrap;transform-origin:100% 50%;transform:rotate(-45deg);letter-spacing:0.5px">14:53</div>
<div class="a" style="left:957.4px;top:549.5px;width:60px;height:14px;line-height:14px;text-align:right;font-size:11px;white-space:nowrap;transform-origin:100% 50%;transform:rotate(-45deg);letter-spacing:0.5px">14:59</div>
<div class="a" style="left:981.5px;top:549.5px;width:60px;height:14px;line-height:14px;text-align:right;font-size:11px;white-space:nowrap;transform-origin:100% 50%;transform:rotate(-45deg);letter-spacing:0.5px">15:05</div>
<div class="a" style="left:1005.6px;top:549.5px;width:60px;height:14px;line-height:14px;text-align:right;font-size:11px;white-space:nowrap;transform-origin:100% 50%;transform:rotate(-45deg);letter-spacing:0.5px">15:11</div>
<div class="a" style="left:1029.7px;top:549.5px;width:60px;height:14px;line-height:14px;text-align:right;font-size:11px;white-space:nowrap;transform-origin:100% 50%;transform:rotate(-45deg);letter-spacing:0.5px">15:17</div>
<div class="a" style="left:1053.8px;top:549.5px;width:60px;height:14px;line-height:14px;text-align:right;font-size:11px;white-space:nowrap;transform-origin:100% 50%;transform:rotate(-45deg);letter-spacing:0.5px">15:23</div>
<div class="a" style="left:1077.9px;top:549.5px;width:60px;height:14px;line-height:14px;text-align:right;font-size:11px;white-space:nowrap;transform-origin:100% 50%;transform:rotate(-45deg);letter-spacing:0.5px">15:29</div>
<div class="a" style="left:1102.0px;top:549.5px;width:60px;height:14px;line-height:14px;text-align:right;font-size:11px;white-space:nowrap;transform-origin:100% 50%;transform:rotate(-45deg);letter-spacing:0.5px">15:35</div>
<div class="a" style="left:1126.1px;top:549.5px;width:60px;height:14px;line-height:14px;text-align:right;font-size:11px;white-space:nowrap;transform-origin:100% 50%;transform:rotate(-45deg);letter-spacing:0.5px">15:41</div>
<div class="a" style="left:1150.2px;top:549.5px;width:60px;height:14px;line-height:14px;text-align:right;font-size:11px;white-space:nowrap;transform-origin:100% 50%;transform:rotate(-45deg);letter-spacing:0.5px">15:47</div>
<div class="a" style="left:1174.3px;top:549.5px;width:60px;height:14px;line-height:14px;text-align:right;font-size:11px;white-space:nowrap;transform-origin:100% 50%;transform:rotate(-45deg);letter-spacing:0.5px">15:53</div>
<div class="a" style="left:1198.4px;top:549.5px;width:60px;height:14px;line-height:14px;text-align:right;font-size:11px;white-space:nowrap;transform-origin:100% 50%;transform:rotate(-45deg);letter-spacing:0.5px">15:59</div>
<div class="a" style="left:1222.5px;top:549.5px;width:60px;height:14px;line-height:14px;text-align:right;font-size:11px;white-space:nowrap;transform-origin:100% 50%;transform:rotate(-45deg);letter-spacing:0.5px">16:05</div>
<div class="a" style="left:1246.6px;top:549.5px;width:60px;height:14px;line-height:14px;text-align:right;font-size:11px;white-space:nowrap;transform-origin:100% 50%;transform:rotate(-45deg);letter-spacing:0.5px">16:11</div>
<div class="a" style="left:1270.7px;top:549.5px;width:60px;height:14px;line-height:14px;text-align:right;font-size:11px;white-space:nowrap;transform-origin:100% 50%;transform:rotate(-45deg);letter-spacing:0.5px">16:17</div>
<div class="a" style="left:1405px;top:357.2px;height:14px;line-height:14px;font-size:11px;white-space:nowrap;color:#1a1a1a;transform:scaleX(0.98);transform-origin:0 50%;">INTERNO-1</div>
<div class="a" style="left:1405px;top:381.4px;height:14px;line-height:14px;font-size:11px;white-space:nowrap;color:#1a1a1a;transform:scaleX(0.98);transform-origin:0 50%;">INTERNO-2</div>
<div class="a" style="left:1402px;top:404.6px;height:14px;line-height:14px;font-size:11px;white-space:nowrap;color:#1a1a1a;transform:scaleX(1.04);transform-origin:0 50%;">MEDIA</div>
<div class="a" style="left:1405px;top:427.6px;height:14px;line-height:14px;font-size:11px;white-space:nowrap;color:#1a1a1a;transform:scaleX(0.935);transform-origin:0 50%;">ESTERNO-1</div>
<div class="a" style="left:1662px;top:19px;width:21px;height:866px;background:#fff"></div>
<div class="a" style="left:1658px;top:19px;width:4px;height:21px;background:#f4f4f4"></div>
<div class="a" style="left:1662px;top:19px;width:17px;height:866px;background:#f0f0f0"></div>
<div class="a" style="left:1662px;top:19px;width:17px;height:8px;background:#e9e9e9;border:1px solid #d0d0d0"></div>
<div class="a" style="left:1662px;top:27px;width:17px;height:1px;background:#000"></div>
<div class="a" style="left:1663px;top:45px;width:15px;height:783px;background:#cdcdcd"></div>
<svg class="a" style="left:1665px;top:33px" width="11" height="8"><path d="M2.3 6.6 L5.5 2.6 L8.7 6.6" fill="none" stroke="#4a4a4a" stroke-width="2.2"/></svg>
<svg class="a" style="left:1665px;top:871px" width="11" height="8"><path d="M2.3 1.8 L5.5 5.8 L8.7 1.8" fill="none" stroke="#4a4a4a" stroke-width="2.2"/></svg>
<div class="a" style="left:1px;top:883px;width:1662px;height:17px;background:#f0f0f0"></div>
<div class="a" style="left:1px;top:883px;width:998px;height:1px;background:#a0a0a0"></div>
<div class="a" style="left:0px;top:883px;width:2px;height:17px;background:#a8a8a8"></div>
<svg class="a" style="left:3px;top:887px" width="62" height="10"><rect x="2" y="2" width="1.3" height="6" fill="#111"/><path d="M3.5 5 L8 2 L8 8 Z" fill="#111"/><path d="M20 5 L24.5 2 L24.5 8 Z" fill="#111"/><path d="M36 2 L40.5 5 L36 8 Z" fill="#111"/><path d="M52 2 L56.5 5 L52 8 Z" fill="#111"/><rect x="56.8" y="2" width="1.3" height="6" fill="#111"/></svg>
<div class="a" style="left:64px;top:883px;width:1px;height:16px;background:#c0c0c0"></div>
<svg class="a" style="left:64px;top:882px" width="80" height="18"><path d="M2 1.5 L9.5 16.5 L69.5 16.5 L76.5 1.5" fill="#fff" stroke="#7a7a7a" stroke-width="1"/></svg>
<div class="a b" style="left:76px;top:883px;font-size:13px;line-height:16px;font-weight:bold;white-space:nowrap">Prova 12</div>
<div class="a" style="left:999px;top:883px;width:6px;height:16px;background:#fafafa;border-bottom:1px solid #888"></div>
<div class="a" style="left:1004.6px;top:883.5px;width:1.6px;height:15.5px;background:#000"></div>
<div class="a" style="left:1007px;top:884px;width:655px;height:15px;background:#f0f0f0"></div>
<div class="a" style="left:1023px;top:884px;width:556px;height:15px;background:#cdcdcd"></div>
<svg class="a" style="left:1010px;top:886px" width="8" height="11"><path d="M6.2 2.2 L2.6 5.5 L6.2 8.8" fill="none" stroke="#4a4a4a" stroke-width="2.2"/></svg>
<svg class="a" style="left:1643px;top:886px" width="8" height="11"><path d="M1.8 2.2 L5.4 5.5 L1.8 8.8" fill="none" stroke="#4a4a4a" stroke-width="2.2"/></svg>
<div class="a" style="left:1662px;top:883px;width:17px;height:16px;background:#f0f0f0"></div>
<div class="a" style="left:1656px;top:884px;width:6px;height:15px;background:#f8f8f8;border-bottom:1px solid #8a8a8a"></div>
<div class="a" style="left:1661.6px;top:884px;width:1.5px;height:15px;background:#000"></div>
<svg class="a" style="left:1667px;top:887px" width="12" height="12"><g fill="#8e8e8e"><rect x="7.5" y="3" width="1.6" height="1.6"/><rect x="4.5" y="6.2" width="1.6" height="1.6"/><rect x="7.5" y="6.2" width="1.6" height="1.6"/><rect x="1.5" y="9.3" width="1.6" height="1.6"/><rect x="4.5" y="9.3" width="1.6" height="1.6"/><rect x="7.5" y="9.3" width="1.6" height="1.6"/></g></svg>
<div class="a" style="left:0px;top:900px;width:1683px;height:21px;background:#f0f0f0;border-top:1px solid #fcfcfc"></div>
<div class="a" style="left:4px;top:904px;font-size:11px;line-height:16px;white-space:nowrap">Pronto</div>
<div class="a" style="left:1388px;top:904px;width:32px;height:15px;border:1px solid #d6d6d6"></div>
<div class="a" style="left:1422px;top:904px;width:111px;height:15px;border:1px solid #d6d6d6"></div>
<div class="a" style="left:1535px;top:904px;width:25px;height:15px;border:1px solid #d6d6d6"></div>
<div class="a" style="left:1561px;top:904px;width:19px;height:15px;border:1px solid #d6d6d6"></div>
<div class="a" style="left:1581px;top:904px;width:26px;height:15px;border:1px solid #d6d6d6"></div>
<div class="a" style="left:1608px;top:904px;width:16px;height:15px;border:1px solid #d6d6d6"></div>
<div class="a" style="left:1625px;top:904px;width:31px;height:15px;border:1px solid #d6d6d6"></div>
<div class="a" style="left:1658px;top:904px;width:19px;height:15px;border:1px solid #d6d6d6"></div>
<div class="a" style="left:1582px;top:904px;font-size:10.6px;line-height:17px;white-space:nowrap">NUM</div>
</body></html>
